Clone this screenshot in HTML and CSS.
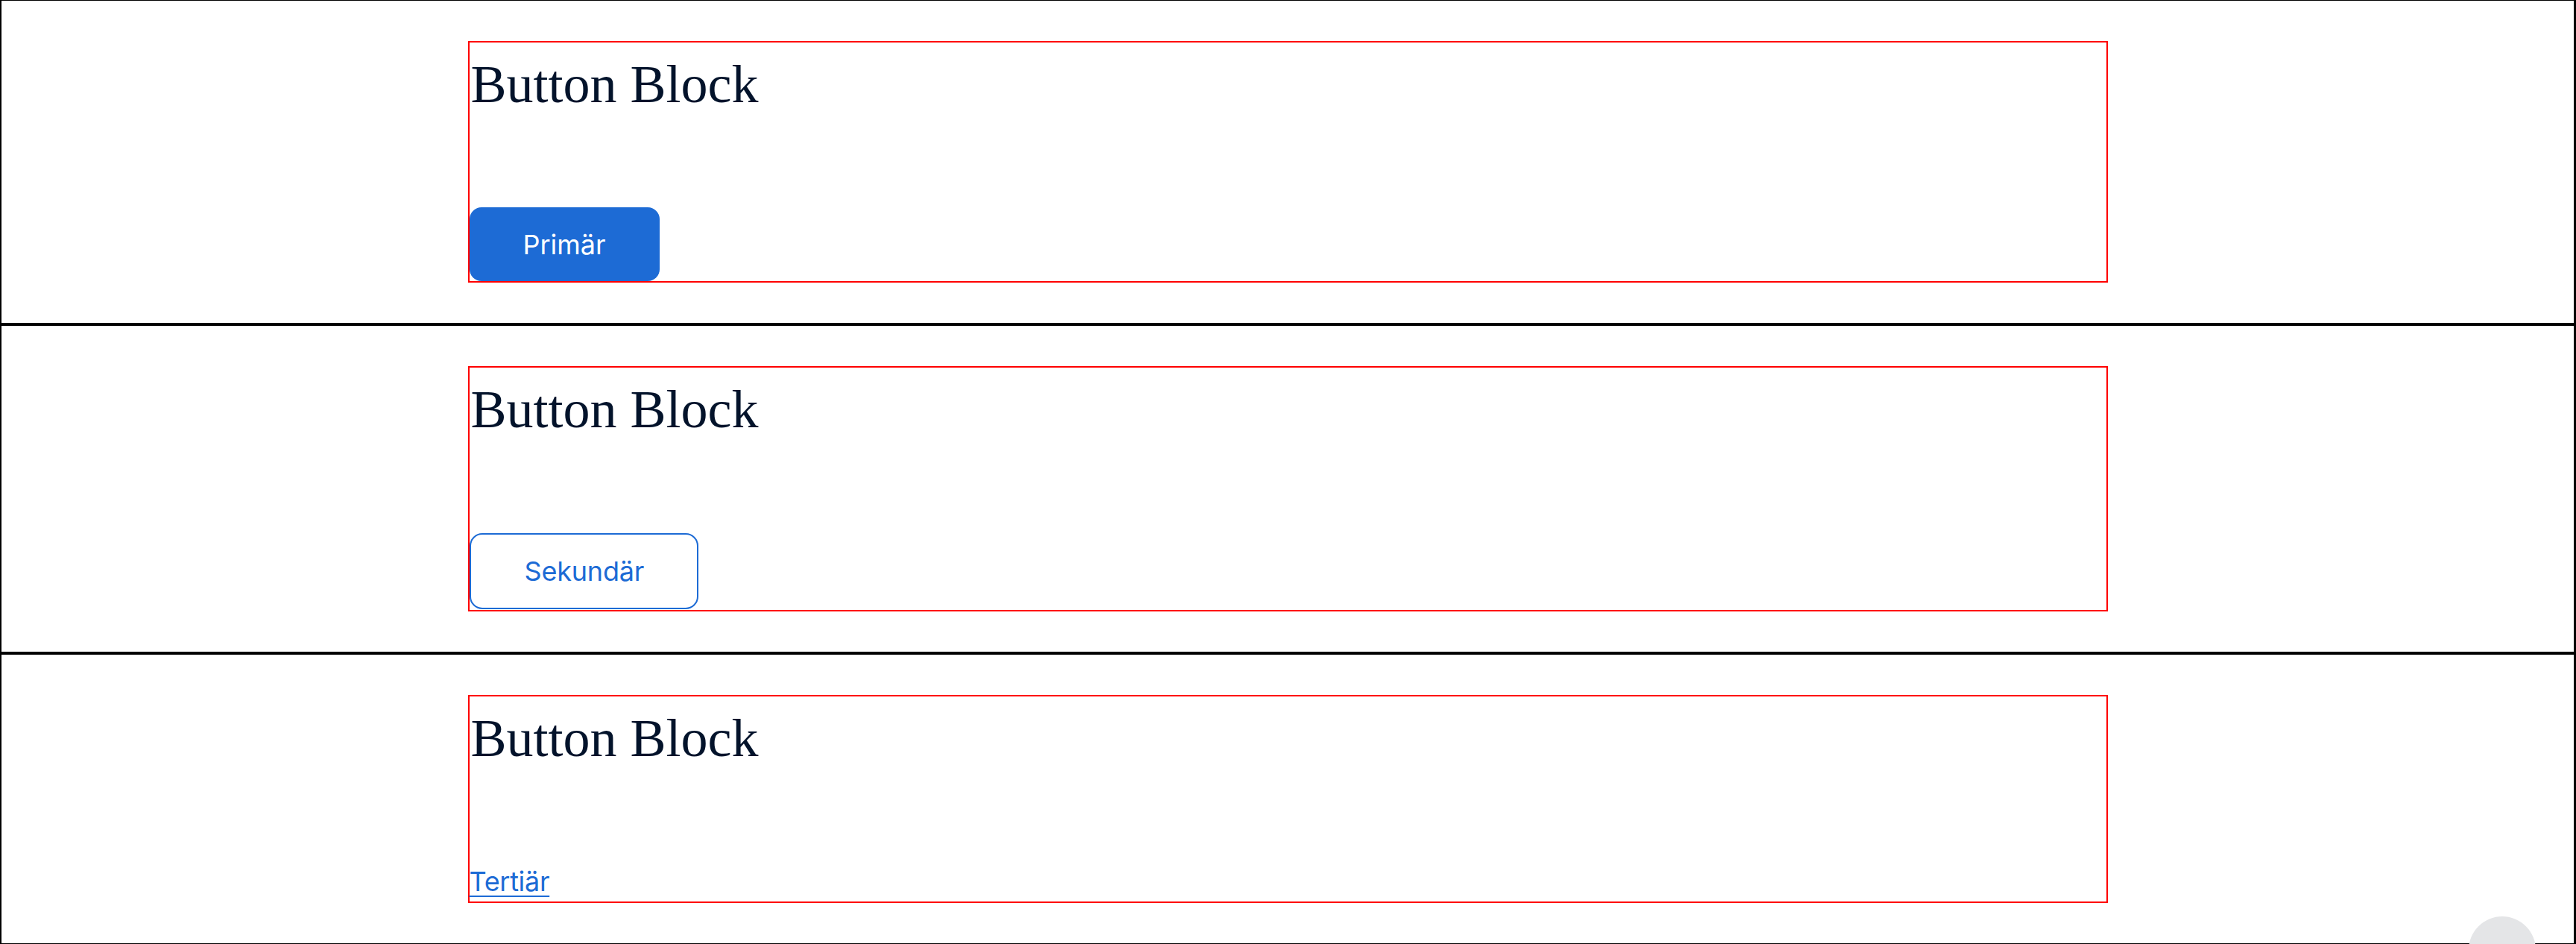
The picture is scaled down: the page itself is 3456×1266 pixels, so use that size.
FILE: index.html
```html
<!DOCTYPE html>
<html lang="sv">
<head>
<meta charset="utf-8">
<title>Button Block</title>
<link rel="stylesheet" href="styles.css">
</head>
<body>
<main class="page">
  <section class="section">
    <div class="block">
      <h2 class="block-title">Button Block</h2>
      <div class="block-actions">
        <a class="btn btn-primary" href="#">Primär</a>
      </div>
    </div>
  </section>
  <section class="section">
    <div class="block">
      <h2 class="block-title">Button Block</h2>
      <div class="block-actions">
        <a class="btn btn-secondary" href="#">Sekundär</a>
      </div>
    </div>
  </section>
  <section class="section section-last">
    <div class="block">
      <h2 class="block-title">Button Block</h2>
      <div class="block-actions">
        <a class="link-tertiary" href="#">Tertiär</a>
      </div>
    </div>
  </section>
</main>
<div class="fab" aria-hidden="true"></div>
</body>
</html>
```

FILE: styles.css
```css
html, body {
  margin: 0;
  padding: 0;
  background: #ffffff;
}

body {
  width: 3456px;
  height: 1266px;
  overflow: hidden;
  font-family: Inter, "Liberation Sans", sans-serif;
  box-sizing: border-box;
}

.page {
  box-sizing: border-box;
  width: 3456px;
  height: 1266px;
  border-top: 1px solid #000;
  border-left: 2px solid #000;
  border-right: 3px solid #000;
  border-bottom: 1px solid #000;
  display: flex;
  flex-direction: column;
}

.section {
  padding: 54px 0;
  border-bottom: 4px solid #000;
}

.section-last {
  border-bottom: 0;
}

.block {
  box-sizing: border-box;
  width: 2200px;
  margin: 0 auto;
  border: 2px solid #ff0000;
  display: flex;
  flex-direction: column;
  align-items: flex-start;
}

.block-title {
  margin: 0 0 109px 0;
  padding-left: 2px;
  font-family: "Liberation Serif", "Times New Roman", serif;
  font-weight: 400;
  font-size: 72px;
  line-height: 112px;
  color: #03132b;
}

.block-actions {
  display: flex;
}

.btn {
  box-sizing: border-box;
  display: inline-flex;
  align-items: center;
  justify-content: center;
  padding: 0 72px;
  font-family: Inter, "Liberation Sans", sans-serif;
  font-size: 36px;
  font-weight: 400;
  text-decoration: none;
  white-space: nowrap;
}

.btn-primary {
  height: 99px;
  background: #1d6bd5;
  color: #ffffff;
  border-radius: 16px;
}

.btn-secondary {
  height: 102px;
  margin: 1px 0;
  padding: 0 71px 0 72px;
  background: #ffffff;
  color: #1d6bd5;
  border: 2px solid #1d6bd5;
  border-radius: 17px;
  letter-spacing: -0.2px;
}

.link-tertiary {
  display: block;
  font-family: Inter, "Liberation Sans", sans-serif;
  font-size: 36px;
  line-height: 54px;
  letter-spacing: -0.3px;
  color: #1d6bd5;
  text-decoration: underline;
  text-decoration-thickness: 2px;
  text-underline-offset: 6px;
}

.fab {
  position: fixed;
  right: 54px;
  bottom: -53px;
  width: 90px;
  height: 90px;
  border-radius: 50%;
  background: #e4e5e7;
}
```
